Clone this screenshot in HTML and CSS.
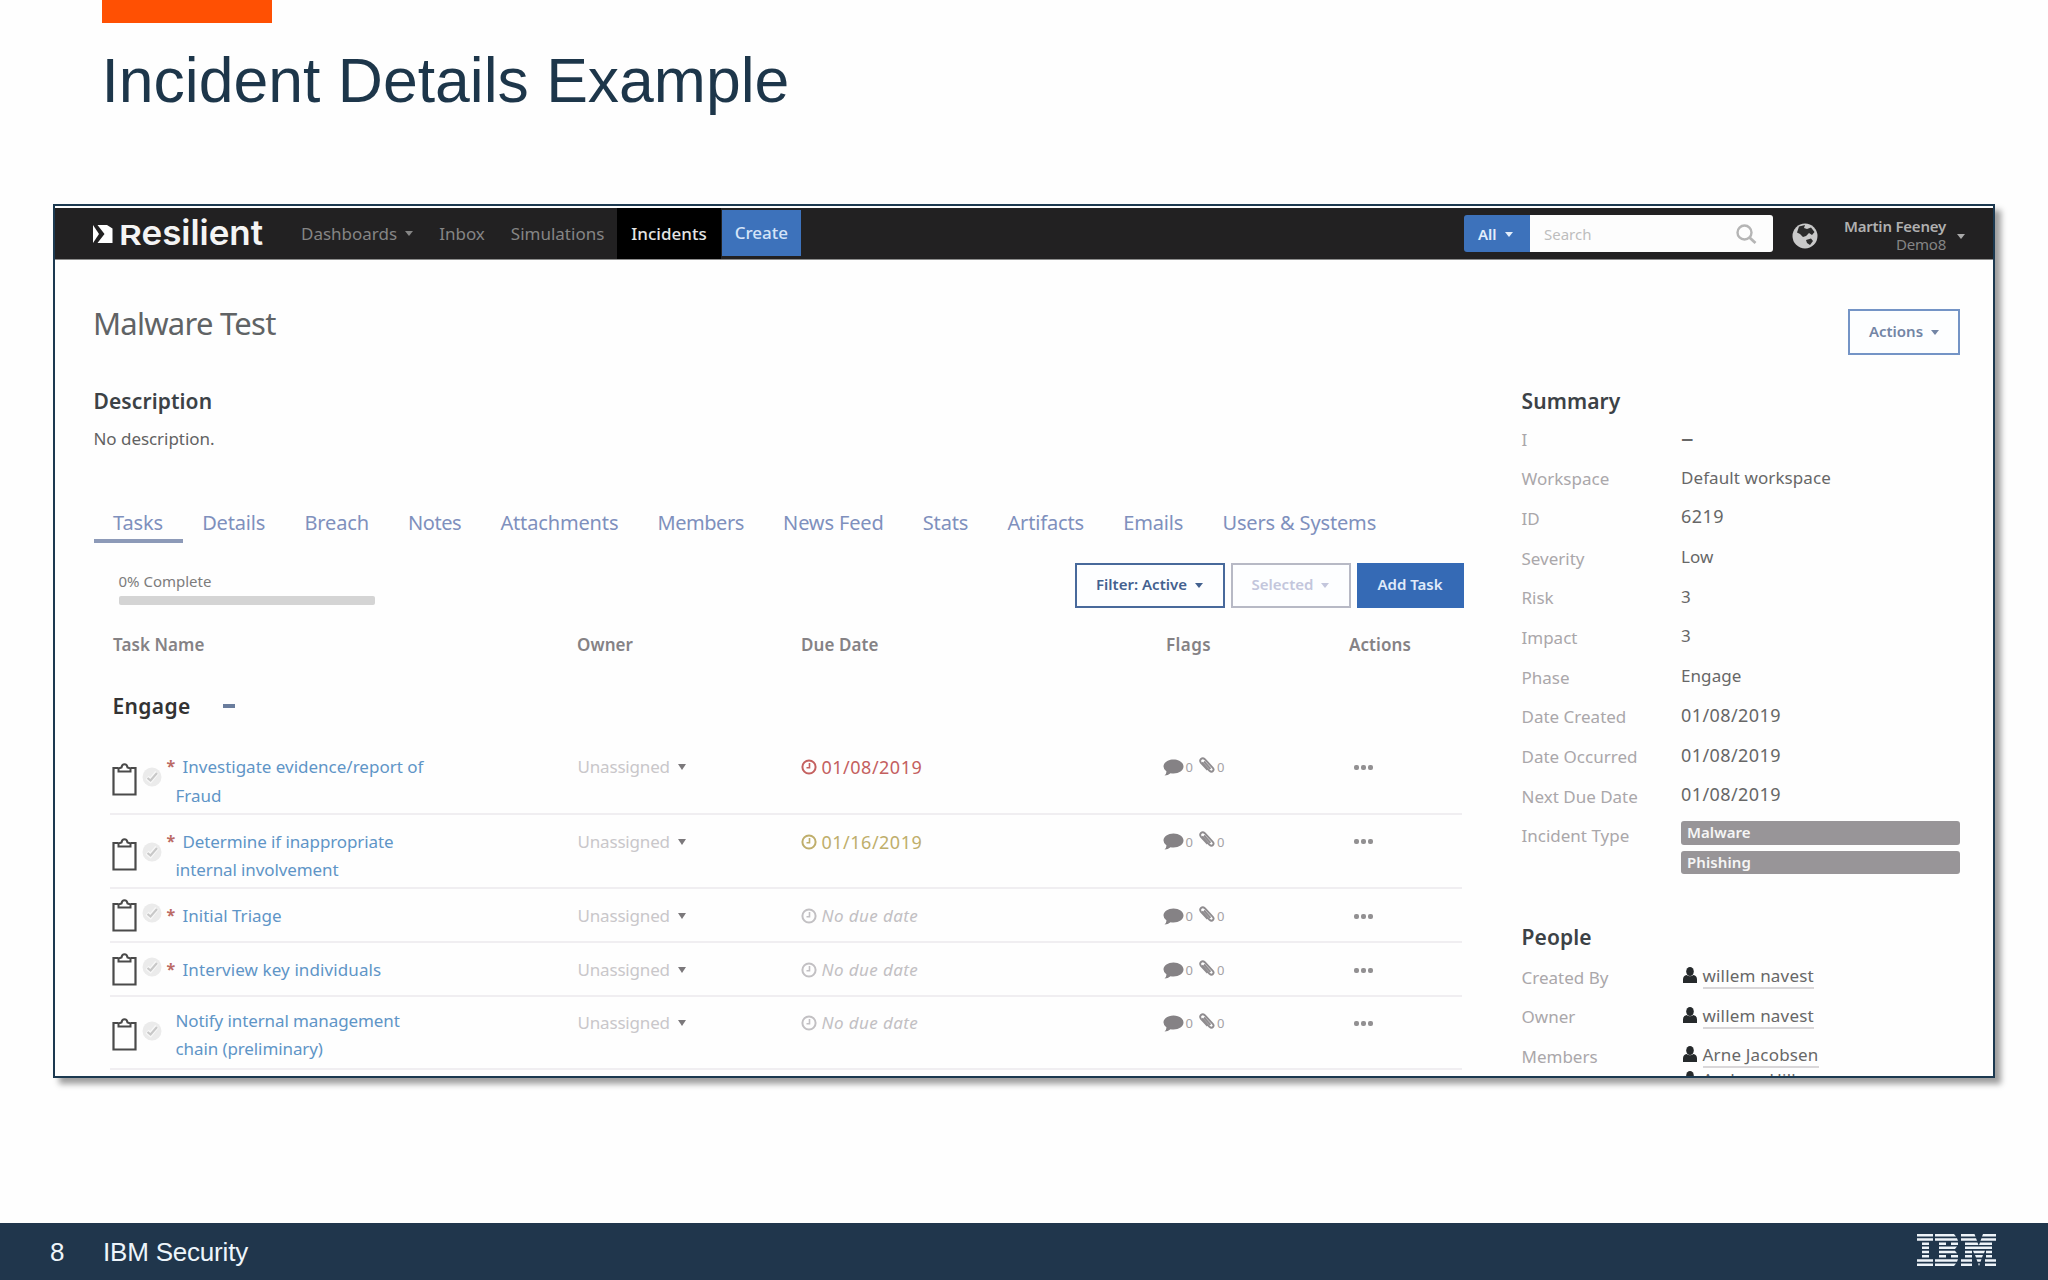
FILE: index.html
```html
<!DOCTYPE html>
<html lang="en">
<head>
<meta charset="utf-8">
<title>Incident Details Example</title>
<link rel="stylesheet" href="styles.css">
</head>
<body>
<svg class="defs" width="0" height="0" aria-hidden="true">
  <symbol id="clipboard" viewBox="0 0 25 33"><path d="M6.500 5H1.500V31.500H23.500V5H18.500" fill="none" stroke="#4a4a4a" stroke-width="2.200"/><path d="M6.500 8.500V5.500L9.500 4.500Q10 1.300 12.500 1.300T15.500 4.500L18.500 5.500V8.500Z" fill="#fff" stroke="#4a4a4a" stroke-width="2"/></symbol>
  <symbol id="check" viewBox="0 0 20 20"><circle cx="10" cy="10" r="9.500" fill="#ebebeb"/><path d="M5 10.500L8.500 13.500L15 5.500" fill="none" stroke="#f8f8f8" stroke-width="4.500"/><path d="M5.500 11L8.500 13.500L15 6" fill="none" stroke="#c8c8c8" stroke-width="2.200"/></symbol>
  <symbol id="clock" viewBox="0 0 16 16"><circle cx="8" cy="8" r="6.600" fill="none" stroke="currentColor" stroke-width="2"/><path d="M8.500 4V8.800H5.500" fill="none" stroke="currentColor" stroke-width="1.600"/></symbol>
  <symbol id="comment" viewBox="0 0 21 17"><path d="M10.500 .5C16 .5 20.500 3.500 20.500 7.500S16 14.500 10.500 14.500Q9 14.500 7.500 14.200Q5 16.500 1.500 16.500Q3.500 14.500 3.500 12.500Q.5 10.500 .5 7.500C.5 3.500 5 .5 10.500 .5Z" fill="#858285"/></symbol>
  <symbol id="clip" viewBox="0 0 16 17"><path d="M3 5.500L10.500 13.800Q12.500 15.500 14 14Q15.300 12.500 13.800 10.800L5.800 2.200Q3.800 .5 2 2Q.3 3.800 2 5.800L8.500 12.800M5 4.500L11.500 11.800" fill="none" stroke="#8f8c8f" stroke-width="1.900"/></symbol>
  <symbol id="person" viewBox="0 0 14 16"><ellipse cx="7" cy="4.500" rx="3.800" ry="4.500" fill="#25292b"/><path d="M0 16V12.500Q0 8.500 3.600 8Q7 10.500 10.400 8Q14 8.500 14 12.500V16Z" fill="#25292b"/></symbol>
</svg>

<div class="accent"></div>
<h1 class="title">Incident Details Example</h1>

<section class="panel">
  <header class="bar">
    <div class="logo">
      <svg width="20" height="18" viewBox="0 0 20 18"><path d="M0 0L6 9L0 18Z" fill="#fff"/><path d="M4.500 0H14L19.500 3.500V18H4.500L11.500 9Z" fill="#fff"/></svg>
      <span class="word"><span class="cap">R</span>esilient</span>
    </div>
    <nav class="nav">
      <a>Dashboards<i class="caret"></i></a><a>Inbox</a><a>Simulations</a><a class="current">Incidents</a><a class="create">Create</a>
    </nav>
    <div class="tools">
      <div class="scope">All<i class="caret"></i></div>
      <div class="search"><span>Search</span>
        <svg width="21" height="20" viewBox="0 0 21 20"><circle cx="8.500" cy="8.500" r="7" fill="none" stroke="#b5b5b5" stroke-width="2.400"/><path d="M13.500 13.500L19.500 19" stroke="#b5b5b5" stroke-width="2.800"/></svg>
      </div>
      <svg class="globe" width="26" height="26" viewBox="0 0 26 26"><circle cx="13" cy="13" r="12.500" fill="#c9c9c9"/><path d="M7 3.500L13 2L12 5L15 6L19 4.500L22.500 9L20 12L17 10L14 13L11 14L8 11L5 9.500ZM14 17L19 15.500L21 18L18 22L15 20Z" fill="#2b2b2b"/></svg>
      <div class="user"><b>Martin Feeney</b><span>Demo8</span></div>
      <i class="caret"></i>
    </div>
  </header>

  <div class="head">
    <h2>Malware Test</h2>
    <button class="btn outline big">Actions<i class="caret"></i></button>
  </div>

  <div class="cols">
    <main class="main">
      <h3>Description</h3>
      <p class="desc">No description.</p>
      <div class="tabs">
        <a class="on">Tasks</a><a>Details</a><a>Breach</a><a class="tight">Notes</a><a>Attachments</a><a class="tight">Members</a><a>News Feed</a><a>Stats</a><a>Artifacts</a><a>Emails</a><a>Users &amp; Systems</a>
      </div>
      <div class="controls">
        <div class="progress"><span>0% Complete</span><div class="track"></div></div>
        <div class="buttons">
          <button class="btn outline filter">Filter: Active<i class="caret"></i></button>
          <button class="btn muted">Selected<i class="caret"></i></button>
          <button class="btn solid">Add Task</button>
        </div>
      </div>
      <div class="thead"><span>Task Name</span><span>Owner</span><span>Due Date</span><span class="flagcol">Flags</span><span>Actions</span></div>
      <div class="group">Engage<i class="minus"></i></div>

      <div class="row tall">
        <div class="name"><svg class="cb"><use href="#clipboard"/></svg><svg class="ck"><use href="#check"/></svg><b class="star">*</b><a class="req">Investigate evidence/report of<br>Fraud</a></div>
        <div class="owner">Unassigned<i class="caret"></i></div>
        <div class="due late"><svg><use href="#clock"/></svg>01/08/2019</div>
        <div class="flags"><svg class="cm"><use href="#comment"/></svg>0<svg class="cp"><use href="#clip"/></svg>0</div>
        <div class="dots"><i></i><i></i><i></i></div>
      </div>
      <div class="row tall">
        <div class="name"><svg class="cb"><use href="#clipboard"/></svg><svg class="ck"><use href="#check"/></svg><b class="star">*</b><a class="req narrow">Determine if inappropriate<br>internal involvement</a></div>
        <div class="owner">Unassigned<i class="caret"></i></div>
        <div class="due soon"><svg><use href="#clock"/></svg>01/16/2019</div>
        <div class="flags"><svg class="cm"><use href="#comment"/></svg>0<svg class="cp"><use href="#clip"/></svg>0</div>
        <div class="dots"><i></i><i></i><i></i></div>
      </div>
      <div class="row">
        <div class="name"><svg class="cb"><use href="#clipboard"/></svg><svg class="ck"><use href="#check"/></svg><b class="star">*</b><a class="req">Initial Triage</a></div>
        <div class="owner">Unassigned<i class="caret"></i></div>
        <div class="due none"><svg><use href="#clock"/></svg>No due date</div>
        <div class="flags"><svg class="cm"><use href="#comment"/></svg>0<svg class="cp"><use href="#clip"/></svg>0</div>
        <div class="dots"><i></i><i></i><i></i></div>
      </div>
      <div class="row">
        <div class="name"><svg class="cb"><use href="#clipboard"/></svg><svg class="ck"><use href="#check"/></svg><b class="star">*</b><a class="req wide">Interview key individuals</a></div>
        <div class="owner">Unassigned<i class="caret"></i></div>
        <div class="due none"><svg><use href="#clock"/></svg>No due date</div>
        <div class="flags"><svg class="cm"><use href="#comment"/></svg>0<svg class="cp"><use href="#clip"/></svg>0</div>
        <div class="dots"><i></i><i></i><i></i></div>
      </div>
      <div class="row tall last">
        <div class="name"><svg class="cb"><use href="#clipboard"/></svg><svg class="ck"><use href="#check"/></svg><b class="star"></b><a class="narrow">Notify internal management<br>chain (preliminary)</a></div>
        <div class="owner">Unassigned<i class="caret"></i></div>
        <div class="due none"><svg><use href="#clock"/></svg>No due date</div>
        <div class="flags"><svg class="cm"><use href="#comment"/></svg>0<svg class="cp"><use href="#clip"/></svg>0</div>
        <div class="dots"><i></i><i></i><i></i></div>
      </div>
    </main>

    <aside class="side">
      <h3>Summary</h3>
      <dl>
        <dt>I</dt><dd class="dash">–</dd>
        <dt>Workspace</dt><dd>Default workspace</dd>
        <dt>ID</dt><dd class="num">6219</dd>
        <dt>Severity</dt><dd>Low</dd>
        <dt>Risk</dt><dd>3</dd>
        <dt>Impact</dt><dd>3</dd>
        <dt>Phase</dt><dd>Engage</dd>
        <dt>Date Created</dt><dd class="num">01/08/2019</dd>
        <dt>Date Occurred</dt><dd class="num">01/08/2019</dd>
        <dt>Next Due Date</dt><dd class="num">01/08/2019</dd>
        <dt>Incident Type</dt><dd class="tags"><span>Malware</span><span>Phishing</span></dd>
      </dl>
      <h3 class="people">People</h3>
      <dl class="folk">
        <dt>Created By</dt><dd><svg class="pr"><use href="#person"/></svg><u>willem navest</u></dd>
        <dt>Owner</dt><dd><svg class="pr"><use href="#person"/></svg><u>willem navest</u></dd>
        <dt>Members</dt><dd><svg class="pr"><use href="#person"/></svg><u>Arne Jacobsen</u></dd>
      </dl>
      <div class="more"><svg class="pr"><use href="#person"/></svg><u>Andrew Hill</u></div>
    </aside>
  </div>
</section>

<footer class="foot">
  <span class="page">8</span><span>IBM Security</span>
  <svg class="ibm" width="79" height="32" viewBox="0 0 79 32"><path fill="#eef4f9" d="M0 0h16v2.500h-16zM18 0h19l2 2.500h-21zM44 0h13.500l1 2.500h-14.500zM66 0h13v2.500h-14zM0 4.200h16v2.500h-16zM18 4.200h22l1 2.500h-23zM44 4.200h15l1 2.500h-16zM64.500 4.200h14.500v2.500h-15.500zM5 8.400h7v2.500h-7zM22 8.400h7v2.500h-7zM34 8.400h7v2.500h-7zM48 8.400h12.500l1 2.500h-13.500zM63 8.400h12v2.500h-13zM5 12.600h7v2.500h-7zM22 12.600h18l-2 2.500h-16zM48 12.600h27v2.500h-27zM5 16.800h7v2.500h-7zM22 16.800h16l2 2.500h-18zM48 16.800h7v2.500h-7zM56 16.800h12l-1 2.500h-10zM69 16.800h6v2.500h-6zM5 21h7v2.500h-7zM22 21h7v2.500h-7zM34 21h7v2.500h-7zM48 21h7v2.500h-7zM58 21h8l-1 2.500h-6zM69 21h6v2.500h-6zM0 25.200h16v2.500h-16zM18 25.200h23l-1 2.500h-22zM44 25.200h11v2.500h-11zM59.500 25.200h5l-1 2.500h-3zM68 25.200h11v2.500h-11zM0 29.400h16v2.500h-16zM18 29.400h21l-2 2.500h-19zM44 29.400h11v2.500h-11zM61 29.400h2l-1 2.500zM68 29.400h11v2.500h-11z"/></svg>
</footer>
</body>
</html>
```
FILE: styles.css
```css
* { box-sizing: border-box; }
body {
  margin: 0;
  width: 2048px;
  height: 1280px;
  display: flex;
  flex-direction: column;
  overflow: hidden;
  background: #fefefe;
  font-family: "Noto Sans", sans-serif;
  color: #55585a;
}
h1, h2, h3, p, dl, dd, dt { margin: 0; font-weight: 400; }
.defs { position: absolute; }
i { font-style: normal; }

.accent { width: 170px; height: 23px; margin-left: 102px; background: #ff5003; flex: none; }
.title {
  margin: 21px 0 1px 101.500px;
  font: 400 62.500px/72px "Liberation Sans", Arial, sans-serif;
  color: #1d364a;
}

.panel {
  width: 1942px;
  height: 874px;
  margin: 87px 0 0 53px;
  padding-top: 2px;
  flex: none;
  overflow: hidden;
  border: 2px solid #1c3950;
  background: #fefefe;
  box-shadow: 6px 6px 6px rgba(0, 0, 0, .38);
}

.caret {
  display: inline-block;
  border: 4.500px solid transparent;
  border-top: 5px solid currentColor;
  border-bottom: 0;
  margin-left: 8px;
  vertical-align: 3px;
}

/* top bar */
.bar {
  height: 52px;
  display: flex;
  align-items: center;
  padding: 0 28px 0 38px;
  background: #222122;
  border-bottom: 1px solid #8d8d8d;
}
.logo { display: flex; align-items: center; gap: 6px; width: 195px; color: #f4f4f4; }
.word { font: 600 35px/40px Inter, sans-serif; letter-spacing: -.05px; position: relative; top: -2px; }
.cap { display: inline-block; font-size: 27px; line-height: 27px; width: 22.500px; transform: scaleX(1.3); transform-origin: 0 50%; }
.nav { display: flex; align-items: center; align-self: stretch; font-size: 17px; color: #858585; }
.nav a { padding: 0 13px; display: flex; align-items: center; align-self: stretch; }
.nav .current { background: #000; color: #e4e4e4; font-weight: 500; padding: 0 14px; margin-right: 1px; }
.nav .create { background: #3d72bb; color: #d5e4f8; font-weight: 500; margin: 2px 0 3px; padding-bottom: 1px; }
.tools { display: flex; align-items: center; margin-left: auto; color: #a9a9a9; }
.scope {
  width: 66px; height: 37px; padding-left: 14px; line-height: 38px;
  font-size: 15px; font-weight: 600; color: #e3eefb;
  background: #3d72bb; border-radius: 3px 0 0 3px;
}
.search {
  width: 243px; height: 37px; padding: 0 16px 0 14px;
  display: flex; align-items: center; justify-content: space-between;
  background: #fdfdfd; border-radius: 0 3px 3px 0;
  font-size: 15px; color: #bdbdbd;
}
.globe { margin: 5px 26px 0 19px; }
.user { display: flex; flex-direction: column; align-items: flex-end; margin-top: 3px; font-size: 15px; line-height: 18.500px; letter-spacing: -.22px; }
.user b { font-weight: 600; color: #b0b0b0; }
.user span { color: #858585; }
.tools > .caret { margin: 5px 0 0 11px; }

/* incident heading */
.head { display: flex; justify-content: space-between; height: 95px; padding: 43px 33px 0 38px; }
.head h2 { font-size: 31px; line-height: 40px; letter-spacing: -.75px; color: #606365; }
.btn {
  height: 45px; padding: 0 0 3px; border: 2px solid; background: #fdfeff;
  font: 600 15px "Noto Sans", sans-serif; white-space: nowrap;
}
.btn .caret { vertical-align: 2px; border-width: 5px 4px 0; }
.outline { color: #587099; border-color: #48699b; }
.filter { width: 150px; color: #43618f; }
.big { width: 112px; height: 46px; margin-top: 6px; color: #7385a5; border-color: #7494c6; }
.muted { width: 120px; color: #c3c6dc; border-color: #b7b9c5; }
.solid { width: 107px; color: #e0ebfa; background: #356ab5; border-color: #356ab5; }

.cols { display: flex; padding-left: 38.500px; }
h3 { font-size: 21px; line-height: 28px; font-weight: 600; letter-spacing: .1px; color: #3c4246; margin-top: 32px; }
.main { width: 1370px; }
.desc { margin-top: 12px; font-size: 17px; line-height: 24px; letter-spacing: -.05px; color: #626262; }

.tabs { display: flex; margin-top: 58px; font-size: 20px; line-height: 28px; letter-spacing: -.15px; color: #7f90bd; }
.tabs a { padding: 0 19.600px; height: 34px; }
.tabs .on { border-bottom: 4px solid #8d9ab8; }
.tabs .tight { letter-spacing: -.45px; }

.controls { display: flex; justify-content: space-between; margin-top: 20px; height: 45px; }
.progress { padding: 8px 0 0 25px; font-size: 15px; line-height: 20px; color: #7c7c7c; }
.track { width: 256px; height: 9px; margin-top: 5px; border-radius: 2px; background: #d4d4d4; }
.buttons { display: flex; gap: 6px; }

.thead {
  display: grid; grid-template-columns: 464px 224px 365px 183px 1fr;
  margin-top: 25px; padding-left: 19.500px;
  font-size: 17px; line-height: 24px; font-weight: 600; letter-spacing: .08px; color: #858285;
}
.flagcol { letter-spacing: .42px; }
.group { display: flex; align-items: center; gap: 32px; margin: 35px 0 20px; padding-left: 19px; font-size: 21px; line-height: 28px; font-weight: 600; letter-spacing: .35px; color: #333; }
.minus { width: 12px; height: 4px; background: #6a7d9d; }

.row {
  display: grid; grid-template-columns: 468px 223px 362px 191px 1fr;
  height: 54px; margin: 0 2px 0 16px; padding-top: 13px;
  border-bottom: 2px solid #f0eef1;
  line-height: 28px;
}
.tall { height: 74.500px; }
.last { height: 73px; padding-top: 12px; }
.name { display: flex; font-size: 17px; color: #5f95c7; }
.name a { line-height: 28.500px; }
.last .name a { line-height: 27.500px; margin-top: -2px; }
.name .narrow { letter-spacing: -.1px; }
.name .wide { letter-spacing: .1px; }
.req { text-indent: 7px; }
.cb { width: 25px; height: 33px; margin: -3px 0 0 2px; }
.ck { width: 20px; height: 20px; margin: 1px 5px 0; }
.tall .cb { margin-top: 10px; }
.tall .ck { margin-top: 14px; }
.last .cb { margin-top: 9px; }
.last .ck { margin-top: 12px; }
.star { width: 9px; font-size: 16px; line-height: 26px; color: #bb6b65; }
.owner { font-size: 17px; letter-spacing: -.18px; color: #c9c7ca; }
.owner .caret { color: #7b787b; border-width: 6px 4.500px 0; }
.due { display: flex; align-items: center; gap: 5px; height: 28px; font-size: 18px; letter-spacing: .5px; }
.due svg { width: 16px; height: 16px; }
.late { color: #c4605f; }
.soon { color: #bfae6b; }
.none { color: #c2c0c3; font-style: italic; font-size: 17px; letter-spacing: .4px; }
.flags { display: flex; align-items: center; height: 28px; font-size: 13px; color: #a5a2a5; }
.cm { width: 21px; height: 17px; margin-right: 2px; }
.cp { width: 16px; height: 17px; margin: -4px 2px 0 6px; }
.dots { display: flex; align-items: center; gap: 2px; height: 28px; }
.dots i { width: 5px; height: 5px; border-radius: 2px; background: #929092; }

/* summary column */
.side { width: 438px; margin-left: 58px; }
dl { display: grid; grid-template-columns: 159.500px 1fr; grid-auto-rows: 39.700px; margin-top: 3px; line-height: 39px; font-size: 17px; }
dt { color: #aaa7aa; padding-top: 1.500px; }
dd { color: #676767; letter-spacing: .08px; }
dd.num { font-size: 18px; letter-spacing: .42px; }
dd.dash { font-size: 25px; }
.tags { display: flex; flex-direction: column; gap: 6px; padding-top: 6.500px; }
.tags span { flex: none; height: 23.500px; padding-left: 6px; border-radius: 3px; background: #989598; color: #f5f5f5; font-size: 15px; line-height: 23px; font-weight: 600; }
.people { margin-top: 68.500px; }
.folk { margin-top: 5px; }
.pr { width: 14px; height: 16px; margin: 0 5.500px 0 2px; vertical-align: -1px; }
u { display: inline-block; text-decoration: none; line-height: 23px; border-bottom: 2px solid #d9d7d9; letter-spacing: .18px; }
.more { margin: -7px 0 0 159.500px; font-size: 17px; line-height: 24px; color: #676767; }

.foot {
  margin-top: auto; height: 57.500px; padding: 2px 52px 0 50px;
  display: flex; align-items: center; flex: none;
  background: #20364c; color: #eef5fb;
  font: 26px "Liberation Sans", Arial, sans-serif; letter-spacing: -.2px;
}
.page { width: 53px; }
.ibm { margin: -4px 0 0 auto; }
```
